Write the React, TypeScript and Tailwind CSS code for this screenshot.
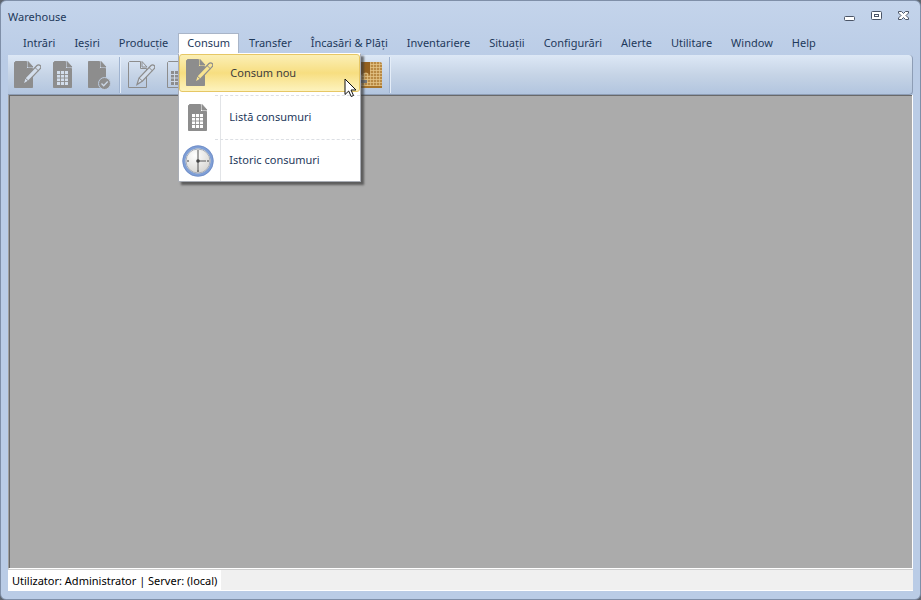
import type { ReactNode } from "react";
import clsx from "clsx";

const MENUS = [
    "Intrări",
    "Ieșiri",
    "Producție",
    "Consum",
    "Transfer",
    "Încasări & Plăți",
    "Inventariere",
    "Situații",
    "Configurări",
    "Alerte",
    "Utilitare",
    "Window",
    "Help",
];

function EditIcon({ outline = false, pencil = "#d3deec" }: { outline?: boolean; pencil?: string }) {
    return (
        <svg width="28" height="30" viewBox="0 0 28 30" className="shrink-0" aria-hidden="true">
            <path
                d="M2.500 1.500h11v7h6v19h-18v-25z"
                fill={outline ? "none" : "#8d8d8d"}
                stroke="#8d8d8d"
            />
            <path d="M15 1.500l5 5.500h-5z" fill={outline ? "none" : "#8d8d8d"} stroke="#8d8d8d" strokeWidth="1" />
            <path d="M10 24.500l2-6.500L24 5.500a2.200 2.200 0 0 1 3.200 3.200L15.500 21z" fill={pencil} stroke="#8d8d8d" strokeWidth="1.200" />
            <path d="M12 18l3.500 3M22 7.500l3.300 3.200" fill="none" stroke="#8d8d8d" strokeWidth="1" />
        </svg>
    );
}

function ListIcon({ outline = false, paper = "#d3deec" }: { outline?: boolean; paper?: string }) {
    return (
        <svg width="28" height="30" viewBox="0 0 28 30" className="shrink-0" aria-hidden="true">
            <path
                d="M5.500 1.500h11v7h6v19h-18v-25z"
                fill={outline ? "none" : "#8d8d8d"}
                stroke="#8d8d8d"
            />
            <path d="M18 1.500l5 5.500h-5z" fill={outline ? "none" : "#8d8d8d"} stroke="#8d8d8d" strokeWidth="1" />
            <path d="M8 11h11v14h-11z" fill={outline ? "#8d8d8d" : paper} />
            <path
                d="M8 14.500h11M8 18h11M8 21.500h11M11.500 11v14M15.500 11v14"
                stroke={outline ? paper : "#8d8d8d"}
                strokeWidth="0.900"
            />
        </svg>
    );
}

function ApproveIcon({ outline = false }: { outline?: boolean }) {
    return (
        <svg width="28" height="30" viewBox="0 0 28 30" className="shrink-0" aria-hidden="true">
            <path
                d="M3.500 1.500h11v7h6v19h-17z"
                fill={outline ? "none" : "#8d8d8d"}
                stroke="#8d8d8d"
            />
            <path d="M16 1.500l5 5.500h-5z" fill={outline ? "none" : "#8d8d8d"} stroke="#8d8d8d" />
            <circle cx="19.500" cy="23.500" r="6" fill="#8d8d8d" stroke="#bccbdf" strokeWidth="1" />
            <path d="M16.500 23.500l2.200 2.200 4-4.200" fill="none" stroke="#cbd7e6" strokeWidth="1.300" />
        </svg>
    );
}

function ClockIcon() {
    return (
        <svg width="32" height="32" viewBox="0 0 32 32" className="shrink-0" aria-hidden="true">
            <defs>
                <radialGradient id="face" cx="0.4" cy="0.3" r="0.8">
                    <stop offset="0" stopColor="#fff" />
                    <stop offset="1" stopColor="#cfcdc8" />
                </radialGradient>
            </defs>
            <circle cx="16" cy="16" r="14" fill="url(#face)" stroke="#7f9fd6" strokeWidth="3" />
            <circle cx="16" cy="16" r="15.300" fill="none" stroke="#6482bd" strokeWidth="0.600" />
            <circle cx="16" cy="16" r="12" fill="none" stroke="#a9afba" />
            <path d="M16 25v2M5 16h2M25 16h2" stroke="#444" strokeWidth="1.200" />
            <path d="M16 5v20M16 16h8" fill="none" stroke="#555" strokeWidth="1" />
            <circle cx="16" cy="16" r="1.800" fill="#444" />
        </svg>
    );
}

function StockIcon() {
    return (
        <svg width="28" height="28" viewBox="0 0 28 28" className="shrink-0" aria-hidden="true">
            <rect x="1" y="1" width="26" height="26" rx="2" fill="#b98a45" />
            <path
                d="M1 3.500h26M1 6.500h26M1 9.500h26M1 12.500h26M1 15.500h26M1 18.500h26M1 21.500h26M1 24.500h26"
                stroke="#dcb878"
            />
            <path
                d="M3.500 1v26M6.500 1v26M9.500 1v26M12.500 1v26M15.500 1v26M18.500 1v26M21.500 1v26M24.500 1v26"
                stroke="#e2c48a"
                strokeOpacity="0.700"
            />
            <path d="M6 1h9v13l-4-3-5 3z" fill="#94601f" />
            <path d="M1 19h11v3H1z" fill="#777" />
            <path d="M1 26h26" stroke="#a8752c" strokeWidth="2" />
        </svg>
    );
}

function Tool({ label, children }: { label: string; children: ReactNode }) {
    return (
        <button aria-label={label} className="flex h-9 w-9 items-center justify-center">
            {children}
        </button>
    );
}

function Divider() {
    return <div className="mx-0.5 h-9 w-0.5 border-l border-[#9fb3d0] bg-[#e4edf8]" />;
}

function Dropdown() {
    const items = [
        { label: "Consum nou", icon: <EditIcon pencil="#f9e48f" /> },
        { label: "Listă consumuri", icon: <ListIcon paper="#fff" /> },
        { label: "Istoric consumuri", icon: <ClockIcon /> },
    ];

    return (
        <div
            role="menu"
            className="absolute top-full left-0 z-10 w-[183px] border border-[#a9adb5] border-t-white bg-white shadow-[3px_3px_2px_rgba(60,60,60,0.7)]"
        >
            {items.map((item, i) => (
                <div key={item.label} className={clsx("flex flex-col", i === 1 && "h-11", i === 2 && "h-[42px]")}>
                    {i > 0 && <div className="ml-9 border-t border-dashed border-[#dcdfe4]" />}
                    <button
                        role="menuitem"
                        className={clsx(
                            "flex w-full items-center text-left",
                            i === 0
                                ? "mb-[3px] h-[38px] rounded-[3px] border border-[#e6c765] bg-linear-to-b from-[#fbefb5] via-[#f7de80] to-[#fdf3bd] text-[#3d3d3d]"
                                : "grow",
                        )}
                    >
                        <span
                            className={clsx(
                                "flex w-[42px] shrink-0 items-center justify-center self-stretch pr-1",
                                i > 0 && "border-r border-[#e2e4e7]",
                            )}
                        >
                            {item.icon}
                        </span>
                        <span className="pl-2">{item.label}</span>
                    </button>
                </div>
            ))}
        </div>
    );
}

function Cursor() {
    return (
        <svg width="13" height="20" viewBox="0 0 13 20" className="absolute top-[45px] left-[166px] z-20" aria-hidden="true">
            <path d="M1 1v15.500l3.700-3.500 2.500 5.500 2.300-1-2.500-5.500h5z" fill="#fff" stroke="#111" strokeWidth="1" />
        </svg>
    );
}

export default function App() {
    return (
        <div className="bg-[#5f6670]">
            <div className="flex min-h-screen flex-col rounded-md border border-[#7f8fa8] bg-linear-to-b from-[#c4d4eb] to-[#bacce6] to-10% px-[7px] pb-2 font-['Noto_Sans',sans-serif] text-[11px] text-[#1e395b]">
                <header className="flex h-8 items-center justify-between">
                    <h1>Warehouse</h1>
                    <div className="flex items-center gap-[15px] pr-[3px]">
                        <button aria-label="Minimize">
                            <svg width="12" height="12" viewBox="0 0 12 12" aria-hidden="true">
                                <rect x="0.500" y="5.500" width="10" height="4" rx="1" fill="#fff" stroke="#4b5567" />
                            </svg>
                        </button>
                        <button aria-label="Maximize">
                            <svg width="12" height="12" viewBox="0 0 12 12" aria-hidden="true">
                                <rect x="0.500" y="0.500" width="10" height="8" rx="1" fill="#fff" stroke="#4b5567" />
                                <rect x="3.500" y="3.500" width="4" height="2" fill="#fff" stroke="#4b5567" />
                            </svg>
                        </button>
                        <button aria-label="Close">
                            <svg width="12" height="12" viewBox="0 0 12 12" aria-hidden="true">
                                <path
                                    d="M.5.500h3l2 2 2-2h3v1.500l-2.500 2.500 2.500 2.500v1.500h-3l-2-2-2 2h-3v-1.500l2.500-2.500-2.500-2.500z"
                                    fill="#fff"
                                    stroke="#4b5567"
                                />
                            </svg>
                        </button>
                    </div>
                </header>

                <nav className="flex gap-px pl-1.5">
                    {MENUS.map((name) => (
                        <div key={name} className="relative">
                            <button
                                className={clsx(
                                    "h-5 border border-b-0 px-2 whitespace-nowrap",
                                    name === "Consum" ? "border-[#a9b5c8] bg-white" : "border-transparent",
                                )}
                            >
                                {name}
                            </button>
                            {name === "Consum" && (
                                <>
                                    <Dropdown />
                                    <Cursor />
                                </>
                            )}
                        </div>
                    ))}
                </nav>

                <div className="mt-0.5 flex h-10 items-center rounded-r-sm border-r border-b border-[#8d9db5] bg-linear-to-b from-[#dde8f6] via-[#c6d4e6] to-[#b2c5df] pl-px">
                    <Tool label="Intrare nouă"><EditIcon /></Tool>
                    <Tool label="Listă intrări"><ListIcon /></Tool>
                    <Tool label="Aprobare intrări"><ApproveIcon /></Tool>
                    <Divider />
                    <Tool label="Ieșire nouă"><EditIcon outline /></Tool>
                    <Tool label="Listă ieșiri"><ListIcon outline /></Tool>
                    <Tool label="Aprobare ieșiri"><ApproveIcon outline /></Tool>
                    <Divider />
                    <Tool label="Consum nou"><EditIcon /></Tool>
                    <Tool label="Listă consumuri"><ListIcon /></Tool>
                    <Tool label="Aprobare consumuri"><ApproveIcon /></Tool>
                    <Divider />
                    <Tool label="Stocuri"><StockIcon /></Tool>
                    <Divider />
                </div>

                <main className="flex grow border border-t-0 border-r-white border-b-white border-l-[#a0a0a0]">
                    <div className="grow border-t border-l border-[#696969] bg-[#ababab]" />
                </main>

                <footer className="flex h-[22px] border-y border-t-[#d0d0d0] border-b-white bg-[#f0f0f0] text-black">
                    <span className="flex items-center bg-white px-1 pt-0.5">Utilizator: Administrator | Server: (local)</span>
                </footer>
            </div>
        </div>
    );
}
